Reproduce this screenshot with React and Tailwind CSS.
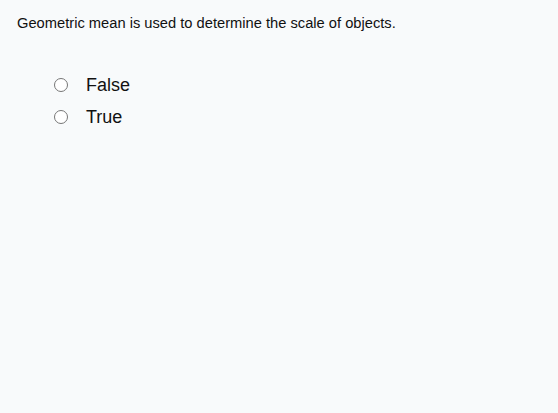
import React from 'react';

const options = ['False', 'True'];

const App = () => {
    return (
        <div className="w-[558px] h-[413px] bg-[#f8fafb] text-[#111] overflow-hidden" style={{ fontFamily: '"Liberation Sans", Arial, sans-serif' }}>
            <div className="pt-[14px] pl-[17px]">
                <p className="text-[14.7px] leading-[18px]">Geometric mean is used to determine the scale of objects.</p>

                {/* Answers */}
                <div className="mt-[42px] pl-[37px] flex flex-col gap-[10px]">
                    {options.map((opt) => (
                        <label key={opt} className="flex items-center h-[22px]">
                            <span className="w-[14px] h-[14px] rounded-full border border-[#767676] bg-white"></span>
                            <span className="ml-[18px] text-[18px] leading-[22px]">{opt}</span>
                        </label>
                    ))}
                </div>
            </div>
        </div>
    );
};

export default App;
